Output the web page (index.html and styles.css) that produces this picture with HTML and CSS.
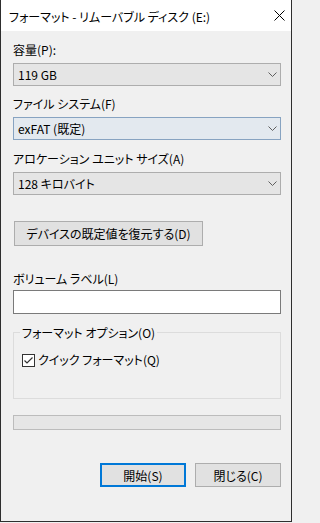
FILE: index.html
```html
<!DOCTYPE html>
<html lang="ja">
<head>
<meta charset="utf-8">
<link rel="stylesheet" href="styles.css">
</head>
<body>
<div class="window">
  <div class="titlebar">
    <span class="title">フォーマット - リムーバブル ディスク (E:)</span>
    <svg class="close" width="11" height="11" viewBox="0 0 11 11"><path d="M0.5 0.5 L10.5 10.5 M10.5 0.5 L0.5 10.5" stroke="#000" stroke-width="1" fill="none"/></svg>
  </div>
  <div class="content">
    <div class="label">容量(P):</div>
    <div class="select"><span>119 GB</span><svg class="chev" width="9" height="6" viewBox="0 0 9 6"><path d="M0.5 0.5 L4.5 4.5 L8.5 0.5" stroke="#5f5f5f" stroke-width="1" fill="none"/></svg></div>
    <div class="label l2">ファイル システム(F)</div>
    <div class="select hover"><span>exFAT (既定)</span><svg class="chev" width="9" height="6" viewBox="0 0 9 6"><path d="M0.5 0.5 L4.5 4.5 L8.5 0.5" stroke="#5f5f5f" stroke-width="1" fill="none"/></svg></div>
    <div class="label l3">アロケーション ユニット サイズ(A)</div>
    <div class="select"><span>128 キロバイト</span><svg class="chev" width="9" height="6" viewBox="0 0 9 6"><path d="M0.5 0.5 L4.5 4.5 L8.5 0.5" stroke="#5f5f5f" stroke-width="1" fill="none"/></svg></div>
    <div class="btn restore">デバイスの既定値を復元する(D)</div>
    <div class="label l4">ボリューム ラベル(L)</div>
    <div class="input"></div>
    <fieldset class="group">
      <legend>フォーマット オプション(O)</legend>
      <div class="check-row">
        <span class="checkbox"><svg width="11" height="11" viewBox="0 0 11 11"><path d="M1.5 5.5 L4 8 L9.5 2.5" stroke="#333" stroke-width="1.2" fill="none"/></svg></span>
        <span class="check-label">クイック フォーマット(Q)</span>
      </div>
    </fieldset>
    <div class="progress"></div>
    <div class="actions">
      <div class="btn action default">開始(S)</div>
      <div class="btn action">閉じる(C)</div>
    </div>
  </div>
</div>
</body>
</html>
```
FILE: styles.css
```css
* { box-sizing: border-box; }
html, body { margin: 0; padding: 0; background: #f0f0f0; }
body {
  font-family: "Noto Sans CJK JP", sans-serif;
  font-feature-settings: "palt" 1;
  font-size: 12px;
  line-height: 15px;
  color: #000;
}
.window {
  width: 292px;
  height: 522px;
  border: 1px solid #2e2e2e;
  border-top: none;
  background: #f0f0f0;
  display: flex;
  flex-direction: column;
}
.titlebar {
  height: 31px;
  background: #fff;
  display: flex;
  align-items: flex-start;
  justify-content: space-between;
  padding: 9px 6px 0 8px;
  flex: none;
}
.close { margin-top: 1px; }
.content {
  padding: 11px 10px 0 12px;
  display: flex;
  flex-direction: column;
}
.label { height: 15px; }
.l2 { margin-top: 10px; }
.l3 { margin-top: 11px; }
.l4 { margin-top: 25px; }
.select {
  margin-top: 6px;
  height: 23px;
  background: #e5e5e5;
  border: 1px solid #adadad;
  display: flex;
  align-items: center;
  justify-content: space-between;
  padding: 0 3px 0 4px;
}
.select.hover {
  background: #e3e9ef;
  border-color: #87a3c1;
}
.chev { margin-top: 1px; }
.btn {
  background: #e1e1e1;
  border: 1px solid #adadad;
  display: flex;
  align-items: center;
  justify-content: center;
}
.restore {
  margin-top: 26px;
  margin-left: 1px;
  width: 189px;
  height: 25px;
}
.input {
  margin-top: 4px;
  height: 24px;
  background: #fff;
  border: 1px solid #7a7a7a;
}
.group {
  margin: 11px 0 0 0;
  border: 1px solid #dcdcdc;
  padding: 12px 6px 31px 6px;
  min-width: 0;
}
.group legend {
  padding: 0 2px;
  line-height: 15px;
}
.check-row {
  display: flex;
  align-items: center;
  margin-left: 2px;
  height: 15px;
}
.checkbox {
  width: 13px;
  height: 13px;
  border: 1px solid #333;
  background: #fff;
  display: flex;
  align-items: center;
  justify-content: center;
  margin-top: 1px;
}
.check-label { margin-left: 3px; }
.progress {
  margin-top: 16px;
  height: 15px;
  background: #e6e6e6;
  border: 1px solid #bcbcbc;
}
.actions {
  margin-top: 33px;
  display: flex;
  justify-content: flex-end;
  gap: 9px;
}
.action {
  width: 86px;
  height: 24px;
}
.action.default {
  border: 2px solid #0078d7;
}
```
